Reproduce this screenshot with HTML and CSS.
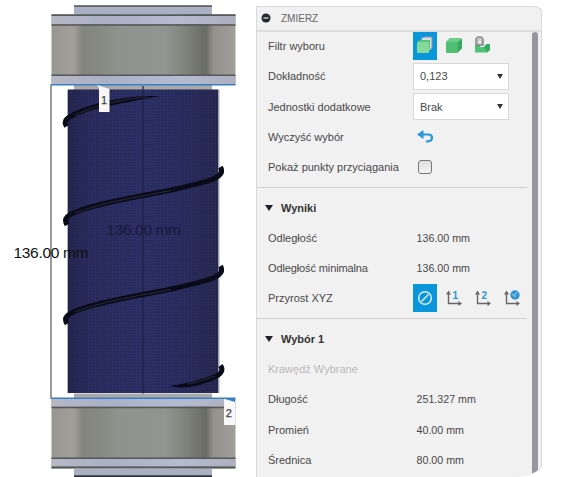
FILE: index.html
```html
<!DOCTYPE html>
<html lang="pl">
<head>
<meta charset="utf-8">
<title>Zmierz</title>
<link rel="stylesheet" href="styles.css">
</head>
<body>
<main class="app">
<svg class="model" viewBox="0 0 256 477" width="256" height="477">
  <defs>
    <linearGradient id="metal">
      <stop offset="0" stop-color="#96958f"/><stop offset=".04" stop-color="#9a9994"/><stop offset=".12" stop-color="#a19f9a"/>
      <stop offset=".17" stop-color="#83847e"/><stop offset=".26" stop-color="#878983"/><stop offset=".36" stop-color="#90938d"/>
      <stop offset=".62" stop-color="#92958f"/><stop offset=".74" stop-color="#7e807a"/><stop offset=".79" stop-color="#73756e"/><stop offset=".84" stop-color="#696c65"/>
      <stop offset=".88" stop-color="#92918b"/><stop offset="1" stop-color="#a19f99"/>
    </linearGradient>
    <linearGradient id="rim">
      <stop offset="0" stop-color="#b6b8c4"/><stop offset=".3" stop-color="#abb0c6"/><stop offset=".7" stop-color="#b5bbd0"/><stop offset="1" stop-color="#adafbe"/>
    </linearGradient>
    <linearGradient id="tube">
      <stop offset="0" stop-color="#25274f"/><stop offset=".14" stop-color="#2a2d5e"/><stop offset=".5" stop-color="#2f3269"/><stop offset=".8" stop-color="#2a2d5e"/><stop offset="1" stop-color="#282a50"/>
    </linearGradient>
    <pattern id="mesh" width="3" height="3" patternUnits="userSpaceOnUse"><path d="M0 .5H3M.5 0V3" stroke="#171b48" stroke-opacity=".2"/></pattern>
  </defs>
  <rect x="74" y="5" width="138" height="10" fill="#aab0c4"/><path d="M74 6.200H212" stroke="#66676b" stroke-width="1.800"/>
  <rect x="51.500" y="14" width="184" height="71" fill="url(#metal)"/>
  <rect x="51.500" y="16" width="184" height="8" fill="url(#rim)"/><rect x="51.500" y="76" width="184" height="8" fill="url(#rim)"/>
  <path d="M51.500 15.200H235.500M51.500 25H235.500M51.500 75.300H235.500" stroke="#55575a" stroke-width="1.500"/>
  <rect x="74" y="85" width="138" height="5" fill="#aaa9a7"/>
  <rect x="68" y="89.500" width="150.500" height="303.500" fill="url(#tube)"/>
  <rect x="68" y="89.500" width="150.500" height="303.500" fill="url(#mesh)"/>
  <path d="M67.500 90V393M219 90V393" stroke="#aeb0bb"/>
  <path d="M143 86V397" stroke="#1b1e45" stroke-width="1.200"/>
  <rect x="74" y="393.500" width="138" height="4.500" fill="#aaa9a7"/>
  <rect x="51.500" y="398" width="184" height="71" fill="url(#metal)"/>
  <rect x="51.500" y="399" width="184" height="7.500" fill="url(#rim)"/><rect x="51.500" y="459" width="184" height="7.500" fill="url(#rim)"/>
  <path d="M51.500 407.500H235.500M51.500 458.300H235.500M51.500 467.300H235.500" stroke="#55575a" stroke-width="1.500"/>
  <rect x="74" y="468.500" width="138" height="8.500" fill="#aab0c4"/><path d="M74 476.200H212" stroke="#35363d" stroke-width="1.800"/>
  <path d="M51 85V398" stroke="#707070" stroke-width="1.400"/>
  <path d="M50.500 84.700H235.500M50.500 398.300H235.500" stroke="#397fc5" stroke-width="1.600"/>
  <path class="coil" d="M66.500 126.500C63 121 67 118 73 115C84 109 94 107 104 104.500"/>
  <path class="tip" d="M98 103.500C117 98 138 95.500 160 96C145 99 120 103 98 109Z"/>
  <path class="coil" d="M67 225C62.500 218 69 214.500 77 211.500C100 202 143 196.500 178 188.500C205 182 227 178.500 220.500 167"/>
  <path class="coil" d="M67 324C62.500 317 69 313.500 77 310.500C100 301 143 295.500 178 287.500C205 281 227 277.500 220.500 266"/>
  <path class="coil" d="M198 382.500C215 378 226 373.500 220.500 365.500"/>
  <path class="tip" d="M203 378.500C192 382 181 384.500 169 386C180 388.500 191 387.500 203 384Z"/>
  <path d="M75 213C103 202 138 197 171 190.500M75 312C103 301 138 296 171 289.500M75 115C98 104 125 99 148 97M188 384Q205 380 215 376" class="shine"/>
  <text x="106.500" y="235" class="ghost" textLength="74.500">136.00 mm</text>
  <text x="13.500" y="258" class="measure" textLength="75">136.00 mm</text>
  <path d="M97 85L109.500 89V112H99V88Z" fill="#f7f7f7"/><text x="101" y="104" class="tag">1</text>
  <path d="M224 399H235.500V425H224Z" fill="#f7f7f7"/><path d="M225 399H235V402Z" fill="#397fc5"/><text x="225.800" y="416.500" class="tag">2</text>
</svg>
<section class="panel">
  <header class="title"><svg width="10" height="10"><circle cx="5" cy="5" r="4.500" fill="#25272f"/><path d="M2.500 5H7.500" stroke="#c8c9cb" stroke-width="1.300"/></svg><span>ZMIERZ</span></header>
  <div class="body">
    <div class="content">
      <div class="group">
        <div class="row"><span class="label">Filtr wyboru</span>
          <span class="tools">
            <span class="tool on"><svg width="24" height="28"><path d="M8 6.500L11 5H19V16L16 19" fill="#d9dce5" stroke="#8792b7"/><path d="M4 10L7 8H17V18L14 20H4Z" fill="#58c474"/><rect x="4" y="10" width="12" height="11" rx="1" fill="#85d99d"/></svg></span>
            <span class="tool"><svg width="24" height="28"><path d="M4 10L8 6H18Q20 6 20 8V16L15 21H5.500Q4 21 4 19.500Z" fill="#50bd72"/><path d="M4.500 10L8 6H18L19.500 7L16 10Z" fill="#69d08a"/><path d="M16 10L20 7V16L15.500 21Z" fill="#3ba65d"/></svg></span>
            <span class="tool"><svg width="24" height="28"><path d="M4 13H9V15H13L15 12H19V18L16 20.500H4Z" fill="#4fc277"/><path d="M13 15L16 12H19V18L16 20.500Z" fill="#3cac61"/><path d="M5 13V8Q5 5 8.500 5Q12 5 12 8V13Z" fill="#d6d6d6" stroke="#858585" stroke-width="1.500"/><rect x="7" y="8" width="3.500" height="4" fill="#f7f7f7" stroke="#999" stroke-width=".7"/></svg></span>
          </span>
        </div>
        <div class="row"><span class="label">Dokładność</span><span class="select">0,123<i></i></span></div>
        <div class="row"><span class="label">Jednostki dodatkowe</span><span class="select">Brak<i></i></span></div>
        <div class="row"><span class="label">Wyczyść wybór</span><svg class="undo" width="18" height="16"><path d="M5 5.500H11.500Q15 5.500 15 9Q15 12.500 9 12.500" fill="none" stroke="#2496d9" stroke-width="2.200"/><path d="M0 5.500L6.500 1V10Z" fill="#2496d9"/></svg></div>
        <div class="row"><span class="label">Pokaż punkty przyciągania</span><span class="check"></span></div>
      </div>
      <div class="group">
        <h2 class="row"><i class="arrow"></i>Wyniki</h2>
        <div class="row"><span class="label">Odległość</span><span class="value">136.00 mm</span></div>
        <div class="row"><span class="label tight">Odległość minimalna</span><span class="value">136.00 mm</span></div>
        <div class="row"><span class="label">Przyrost XYZ</span>
          <span class="tools">
            <span class="tool on"><svg width="24" height="28"><circle cx="12" cy="14" r="6.300" fill="none" stroke="#d9ecf7" stroke-width="1.500"/><path d="M8.500 17.500L15.500 10.500" stroke="#d9ecf7" stroke-width="1.600"/></svg></span>
            <span class="tool"><svg width="24" height="28"><path d="M6.500 9V19.500H18" class="axis"/><path d="M4 10.500L6.500 6.500L9 10.500ZM16.500 17L20 19.500L16.500 22Z" fill="#666"/><text x="10.500" y="14.500" class="num">1</text></svg></span>
            <span class="tool"><svg width="24" height="28"><path d="M6.500 9V19.500H18" class="axis"/><path d="M4 10.500L6.500 6.500L9 10.500ZM16.500 17L20 19.500L16.500 22Z" fill="#666"/><text x="10.500" y="14.500" class="num">2</text></svg></span>
            <span class="tool"><svg width="24" height="28"><path d="M6.500 9V19.500H18" class="axis"/><path d="M4 10.500L6.500 6.500L9 10.500ZM16.500 17L20 19.500L16.500 22Z" fill="#666"/><circle cx="15" cy="11" r="4.700" fill="#3293d4"/><path d="M12 10L15 13V10L17.500 8" fill="none" stroke="#a5d2ed"/></svg></span>
          </span>
        </div>
      </div>
      <div class="group">
        <h2 class="row"><i class="arrow"></i>Wybór 1</h2>
        <div class="row"><span class="label muted">Krawędź Wybrane</span></div>
        <div class="row"><span class="label">Długość</span><span class="value">251.327 mm</span></div>
        <div class="row"><span class="label">Promień</span><span class="value">40.00 mm</span></div>
        <div class="row"><span class="label">Średnica</span><span class="value">80.00 mm</span></div>
      </div>
    </div>
    <div class="scroll"></div>
  </div>
</section>
</main>
</body>
</html>
```
FILE: styles.css
```css
* { box-sizing: border-box; }
body { margin: 0; background: #fff; overflow: hidden; font-family: "Liberation Sans", sans-serif; }
.app { display: flex; width: 568px; height: 477px; }
.model { display: block; flex: none; }
.coil { fill: none; stroke: #090b18; stroke-width: 5; }
.tip { fill: #090b18; }
.shine { fill: none; stroke: #343947; stroke-width: .7; }
.measure, .ghost { font-size: 15.5px; fill: #101010; }
.ghost { fill: #171a37; }
.tag { font-size: 11px; fill: #444; stroke: #444; stroke-width: .25; }
.panel { width: 286px; height: 471px; margin-top: 6px; background: #f1f1f1; border: solid #d8d8d8; border-width: 1px 1px 0; border-radius: 0 9px 32px 0 / 0 5px 12px 0; overflow: hidden; display: flex; flex-direction: column; }
.title { height: 24.5px; flex: none; display: flex; align-items: center; gap: 10px; padding-left: 4px; border-bottom: 2px solid #dedede; font-size: 10px; color: #666; }
.title svg { flex: none; }
.body { flex: 1; display: flex; min-height: 0; }
.content { width: 270px; flex: none; margin-top: -.5px; }
.scroll { width: 6px; margin-left: 5px; background: #96979a; border-radius: 3px 3px 0 0; }
.group { padding-bottom: 5px; }
.group + .group { border-top: 1px solid #cfcfcf; padding-top: 4.2px; }
.row { height: 30.25px; display: flex; align-items: center; padding-left: 11px; margin: 0; font-size: 11px; color: #484848; white-space: nowrap; }
.label { width: 144.5px; }
.tight { letter-spacing: -.12px; }
.muted { color: #b9b9b9; }
.value { margin-left: 4px; font-size: 10.7px; }
h2.row { color: #333; font-weight: 700; padding-left: 8px; }
.arrow { border: 4px solid transparent; border-top: 6px solid #20212b; border-bottom: 0; margin-right: 8px; }
.tools { display: flex; gap: 5px; }
.tool { display: block; width: 24px; height: 28px; }
.tool svg { display: block; }
.on { background: #0996db; }
.select { width: 96px; height: 27px; background: #fff; border: 1px solid #d8d8d8; padding: 0 5px 0 6.5px; display: flex; align-items: center; justify-content: space-between; }
.select i { border: 3.5px solid transparent; border-top: 5px solid #333; border-bottom: 0; }
.undo { margin-left: 4px; }
.check { width: 14px; height: 14px; border: 1.5px solid #777; border-radius: 3px; margin-left: 5px; background: linear-gradient(#ddd, #f4f4f4); }
.axis { fill: none; stroke: #666; stroke-width: 1.4; }
.num { font: bold 10px "Liberation Sans", sans-serif; fill: #2897d7; }
```
